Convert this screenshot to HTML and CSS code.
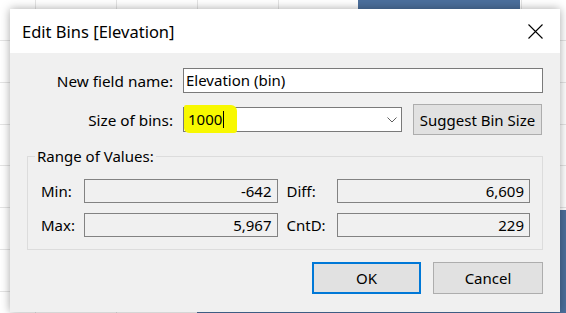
FILE: index.html
```html
<!DOCTYPE html>
<html lang="en">
<head>
  <meta charset="UTF-8" />
  <title>Edit Bins [Elevation]</title>
  <link rel="stylesheet" href="styles.css">
</head>
<body>

  <div class="sheet">
    <div class="bar bar-top"></div>
    <div class="bar bar-right"></div>
    <div class="bar bar-bottom"></div>
  </div>

  <div class="dialog">
    <div class="titlebar">
      <span>Edit Bins [Elevation]</span>
      <svg class="close" width="15" height="15" viewBox="0 0 15 15">
        <path d="M0.5 0.5 L14.5 14.5 M14.5 0.5 L0.5 14.5" stroke="#000" stroke-width="1.1" fill="none"/>
      </svg>
    </div>

    <div class="content">
      <div class="row">
        <label>New field name:</label>
        <div class="input">Elevation (bin)</div>
      </div>

      <div class="row row-bins">
        <label>Size of bins:</label>
        <div class="combo">
          <span class="marker"></span>
          <span class="value">1000<i class="caret"></i></span>
          <svg class="chevron" width="10" height="6" viewBox="0 0 10 6">
            <polyline points="0.5,0.5 5,5 9.5,0.5" stroke="#606060" stroke-width="1" fill="none"/>
          </svg>
        </div>
        <button class="btn">Suggest Bin Size</button>
      </div>

      <fieldset class="range">
        <legend>Range of Values:</legend>
        <div class="range-grid">
          <span>Min:</span>
          <div class="readonly">-642</div>
          <span class="second">Diff:</span>
          <div class="readonly">6,609</div>
          <span>Max:</span>
          <div class="readonly">5,967</div>
          <span class="second">CntD:</span>
          <div class="readonly">229</div>
        </div>
      </fieldset>

      <div class="actions">
        <button class="btn btn-ok">OK</button>
        <button class="btn btn-cancel">Cancel</button>
      </div>
    </div>
  </div>

</body>
</html>
```

FILE: styles.css
```css
* { box-sizing: border-box; }
body {
  margin: 0;
  width: 566px;
  height: 313px;
  overflow: hidden;
  position: relative;
  font-family: 'Noto Sans', 'Open Sans', sans-serif;
  font-size: 15px;
  color: #000;
  background: #fff;
}

/* worksheet behind the dialog */
.sheet {
  position: absolute;
  inset: 0;
  background-image:
    repeating-linear-gradient(to right, transparent 0 35px, #e4e4e4 35px 36px, transparent 36px 81px),
    repeating-linear-gradient(to bottom, transparent 0 40px, #e4e4e4 40px 41px, transparent 41px 41.8px);
}
.bar {
  position: absolute;
  background: #4b6f9c;
}
.bar-top { left: 358px; top: 0; width: 162px; height: 30px; }
.bar-right { left: 530px; top: 210px; width: 40px; height: 110px; }
.bar-bottom { left: 197px; top: 300px; width: 380px; height: 20px; }

/* dialog window */
.dialog {
  position: absolute;
  left: 10px;
  top: 9px;
  width: 550px;
  height: 303px;
  background: #f0f0f0;
  box-shadow: 0 0 9px rgba(0, 0, 0, 0.35);
  display: flex;
  flex-direction: column;
}
.titlebar {
  height: 44px;
  background: #fff;
  display: flex;
  align-items: center;
  justify-content: space-between;
  padding: 0 17px 0 12px;
  font-size: 16.5px;
}
.content {
  padding: 15px 17px 0 17px;
}

.row {
  display: grid;
  grid-template-columns: 146px 1fr;
  column-gap: 10px;
  align-items: center;
  height: 25px;
}
.row label {
  text-align: right;
  font-size: 15.3px;
}
.row-bins {
  grid-template-columns: 146px 219px 130px;
  column-gap: 10px;
  height: 31px;
  margin-top: 11px;
}
.row-bins .btn { margin-left: 1px; }

.input, .combo {
  height: 25px;
  background: #fff;
  border: 1px solid #7a7a7a;
  padding: 0 2px;
  line-height: 23px;
}
.combo {
  position: relative;
  display: flex;
  align-items: center;
  justify-content: space-between;
  padding: 0 3px 0 4px;
}
.marker {
  position: absolute;
  left: 0;
  top: -3px;
  width: 53px;
  height: 28px;
  background: #f8f800;
  border-radius: 2px 6px 3px 5px;
}
.value {
  position: relative;
  display: flex;
  align-items: center;
}
.caret {
  display: inline-block;
  width: 1px;
  height: 17px;
  background: #000;
  margin-left: 1px;
}
.chevron { margin-right: 1px; }

.btn {
  font-family: inherit;
  font-size: 15px;
  color: #000;
  background: #e1e1e1;
  border: 1px solid #adadad;
  padding: 0;
  height: 31px;
}

.range {
  margin: 11px 0 0 0;
  padding: 13px 12px 12px 13px;
  border: 1px solid #dcdcdc;
}
.range legend {
  padding: 0 2px;
  margin-left: -6px;
  line-height: 20px;
}
.range-grid {
  display: grid;
  grid-template-columns: 43px 1fr 59px 1fr;
  row-gap: 10px;
  align-items: center;
}
.range-grid .second {
  padding-left: 9px;
}
.readonly {
  height: 24px;
  line-height: 22px;
  border: 1px solid #828282;
  text-align: right;
  padding-right: 5px;
}

.actions {
  display: flex;
  justify-content: flex-end;
  gap: 12px;
  margin-top: 12px;
}
.btn-ok {
  width: 109px;
  height: 32px;
  border: 2px solid #0078d7;
}
.btn-cancel {
  width: 110px;
  height: 32px;
}
```
